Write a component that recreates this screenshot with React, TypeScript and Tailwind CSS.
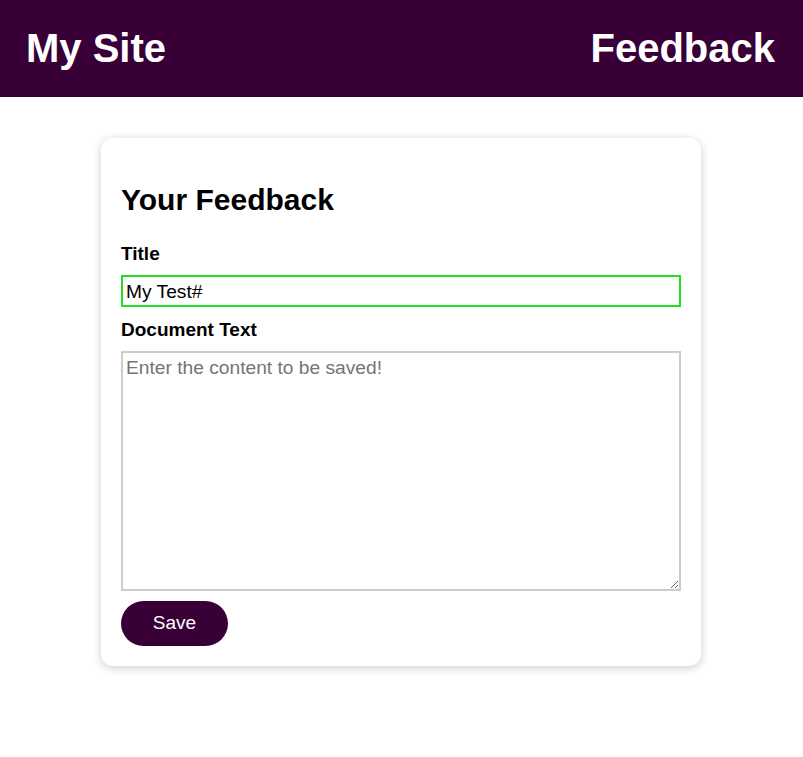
export default function App() {
  return (
    <div className="min-h-screen bg-white font-['Liberation_Sans',Arial,sans-serif] text-black">
      <header className="flex h-[97px] items-center justify-between bg-[#380036] pb-[2px] pl-[26px] pr-[28px] text-white">
        <h1 className="text-[40px] font-bold leading-none">My Site</h1>
        <span className="text-[40px] font-bold leading-none">Feedback</span>
      </header>

      <main className="pl-[101px] pt-[41px]">
        <div className="w-[600px] rounded-xl bg-white px-5 pt-[44px] pb-5 shadow-[0_2px_10px_rgba(0,0,0,0.2)]">
          <h2 className="text-[30px] font-bold leading-[36px]">
            Your Feedback
          </h2>

          <label className="mt-[25px] block text-[19px] font-bold leading-[22px]">
            Title
          </label>
          <input
            defaultValue="My Test#"
            className="mt-[10px] block h-[32px] w-full border-2 border-[#22dd22] px-[3px] pt-[2px] text-[19.2px] outline-none"
          />

          <label className="mt-[12px] block text-[19px] font-bold leading-[22px]">
            Document Text
          </label>
          <textarea
            placeholder="Enter the content to be saved!"
            className="mt-[10px] block h-[240px] w-full border-2 border-[#cccccc] px-[3px] pt-[4px] pb-[2px] text-[19.2px] leading-[22px] outline-none placeholder:text-[#757575]"
          />

          <button className="mt-[10px] h-[45px] w-[107px] rounded-full bg-[#380036] text-[19px] text-white">
            Save
          </button>
        </div>
      </main>
    </div>
  );
}
